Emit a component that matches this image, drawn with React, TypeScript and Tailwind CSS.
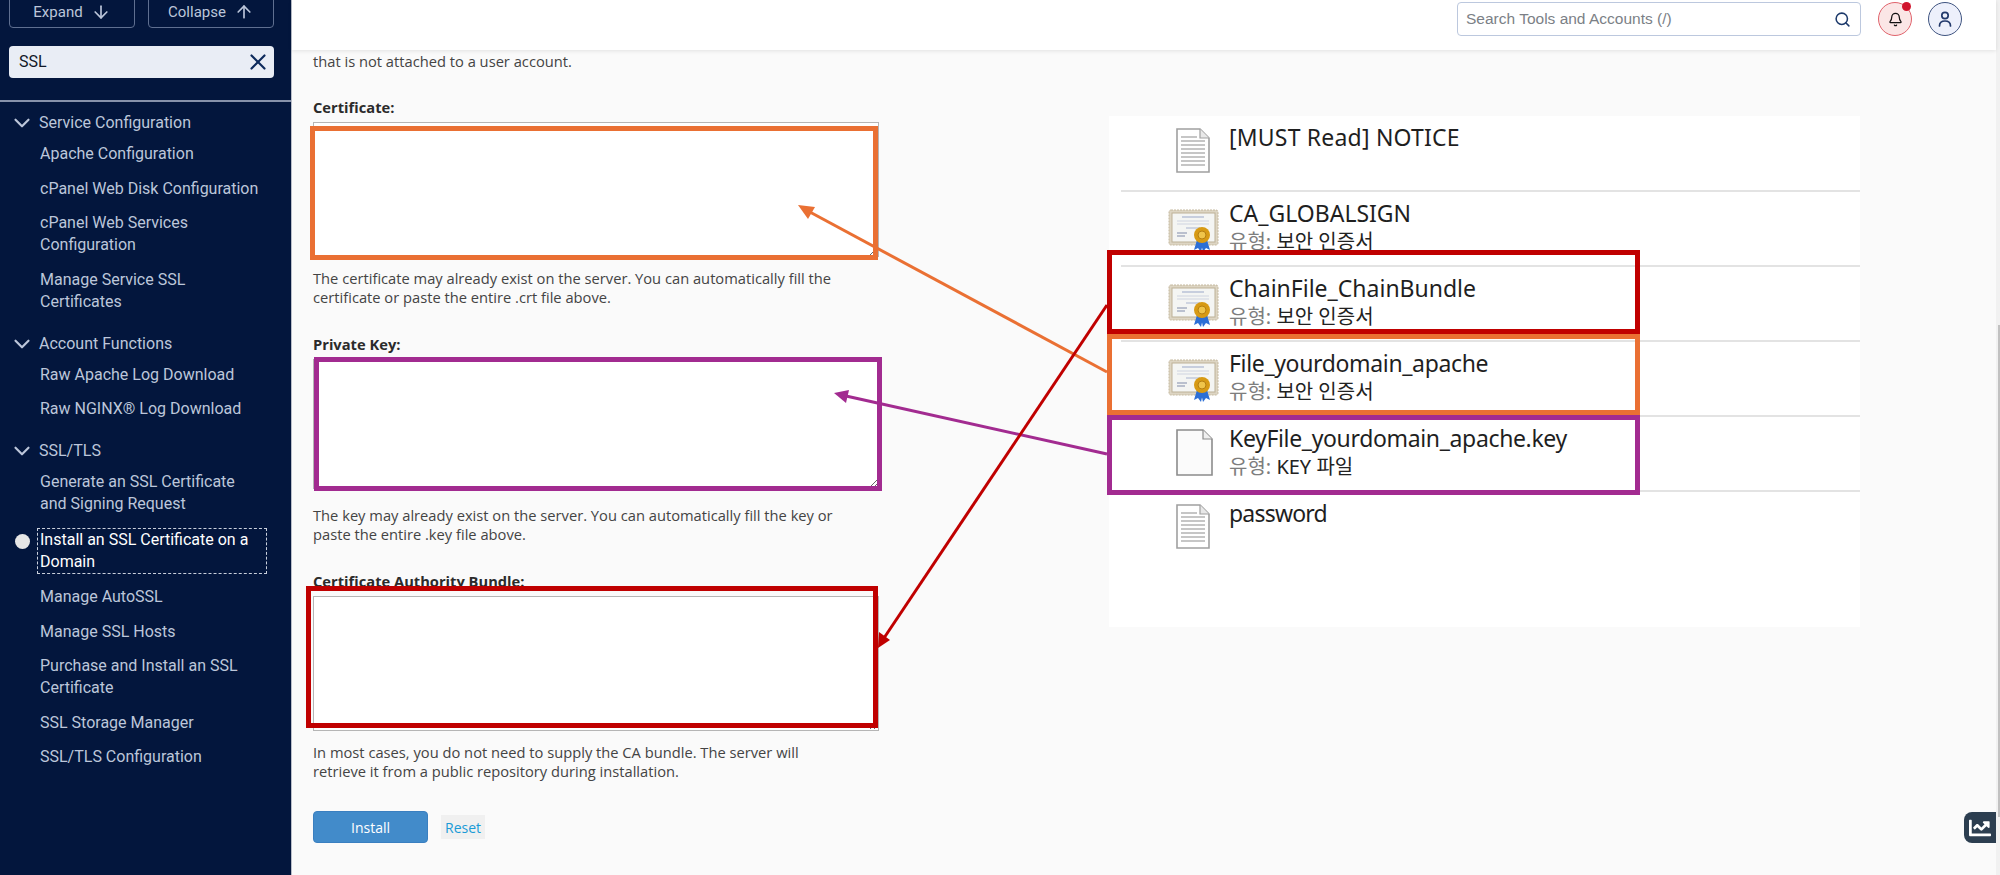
import { ArrowDown, ArrowUp, Bell, ChevronDown, Search, X } from 'lucide-react';
import { FaChartLine } from 'react-icons/fa';

const groups = [
  {
    title: 'Service Configuration',
    items: ['Apache Configuration', 'cPanel Web Disk Configuration', 'cPanel Web Services Configuration', 'Manage Service SSL Certificates'],
  },
  {
    title: 'Account Functions',
    items: ['Raw Apache Log Download', 'Raw NGINX® Log Download'],
  },
  {
    title: 'SSL/TLS',
    items: [
      'Generate an SSL Certificate and Signing Request',
      'Install an SSL Certificate on a Domain',
      'Manage AutoSSL',
      'Manage SSL Hosts',
      'Purchase and Install an SSL Certificate',
      'SSL Storage Manager',
      'SSL/TLS Configuration',
    ],
  },
];

const active = 'Install an SSL Certificate on a Domain';

function Sidebar() {
  return (
    <aside className="w-[292px] shrink-0 h-full overflow-hidden bg-[#03163d] border-r border-[#b9bec9] font-['Roboto',sans-serif] text-[16px] leading-[22px] text-[#bcc6da]">
      <div className="ml-[9px] -mt-1 flex w-[265px] justify-between">
        <button className="flex h-8 w-[126px] items-center justify-center gap-2 rounded border border-[#5f6f90] text-[15px]">
          Expand <ArrowDown size={20} />
        </button>
        <button className="flex h-8 w-[126px] items-center justify-center gap-2 rounded border border-[#5f6f90] text-[15px]">
          Collapse <ArrowUp size={20} />
        </button>
      </div>
      <div className="ml-[9px] mt-[18px] flex h-8 w-[265px] items-center justify-between rounded bg-[#e9edf5] pl-[10px] pr-[3px] text-[#111827]">
        SSL
        <X size={26} strokeWidth={2} className="text-[#0d2a5c]" />
      </div>
      <div className="mt-[22px] h-0.5 bg-[#8792ab]" />
      <nav className="mt-[10px] flex flex-col gap-5">
        {groups.map((group) => (
          <div key={group.title}>
            <div className="flex h-[22px] items-center gap-1 pl-[9px]">
              <ChevronDown size={26} strokeWidth={2} />
              {group.title}
            </div>
            <ul className="mt-[9px] flex flex-col gap-[12.5px]">
              {group.items.map((item) =>
                item === active ? (
                  <li key={item} className="relative ml-[37px] mr-6 border border-dashed border-[#c9cfdc] pl-[2px] text-white">
                    <span className="absolute -left-[23px] top-[5px] size-[15px] rounded-full bg-[#e6e6e6]" />
                    {item}
                  </li>
                ) : (
                  <li key={item} className="ml-10 mr-[26px]">{item}</li>
                ),
              )}
            </ul>
          </div>
        ))}
      </nav>
    </aside>
  );
}

function Header() {
  return (
    <header className="relative z-10 flex h-[50px] w-[1704px] items-start justify-end gap-4 bg-white pr-[34px] pt-0.5 shadow-[0_1px_4px_rgba(0,0,0,0.1)]">
      <div className="mr-px flex h-[34px] w-[404px] items-center justify-between rounded border border-[#bcc8de] pl-2 pr-[9px] font-['Liberation_Sans',sans-serif] text-[15.5px] text-[#7b7f86]">
        Search Tools and Accounts (/)
        <Search size={17} strokeWidth={2.2} className="text-[#1d3a6b]" />
      </div>
      <button className="relative flex size-[34px] items-center justify-center rounded-full border-[1.5px] border-[#e0636c] bg-[#fbe6e6] text-[#111]">
        <Bell size={15} strokeWidth={2} />
        <span className="absolute right-0 -top-px size-[9px] rounded-full bg-[#d0142c]" />
      </button>
      <button className="flex size-[34px] items-center justify-center rounded-full border-[1.5px] border-[#3f5480] bg-[#edf0fb]">
        <svg width="14" height="16" viewBox="0 0 14 16" fill="none" stroke="#22396b" strokeWidth="1.7">
          <circle cx="7" cy="4.5" r="3.2" />
          <path d="M1.5 15C1.5 11.5 4 10 7 10S12.5 11.5 12.5 15" strokeLinecap="round" />
        </svg>
      </button>
    </header>
  );
}

function Field({ label, help, className, areaClass }: { label: string; help: string[]; className: string; areaClass: string }) {
  return (
    <div className={className}>
      <label className="block text-[14.7px] font-bold leading-5 text-[#2b2b2b]">{label}</label>
      <textarea className={`mt-[5px] block w-[566px] border border-[#b5b5b5] bg-white ${areaClass}`} />
      <p className="mt-[12px] text-[14.7px] leading-[19px] text-[#444]">
        {help.map((line) => (
          <span key={line} className="block whitespace-nowrap">{line}</span>
        ))}
      </p>
    </div>
  );
}

function DocIcon() {
  return (
    <svg width="34" height="45" viewBox="0 0 34 45" className="ml-[67px] mt-[12px] shrink-0">
      <path d="M1 1H24L33 10V44H1Z" fill="#fff" stroke="#a0a0a0" strokeWidth="1.6" />
      <path d="M24 1V10H33" fill="#e8e8e8" stroke="#a0a0a0" strokeWidth="1.2" />
      {[9, 13, 17, 21, 25, 29, 33, 37].map((y) => (
        <path key={y} d={`M5 ${y}H${y < 12 ? 21 : 29}`} stroke="#a8a8a8" strokeWidth="1.3" />
      ))}
    </svg>
  );
}

function BlankIcon() {
  return (
    <svg width="37" height="47" viewBox="0 0 37 47" className="ml-[67px] mt-[12px] shrink-0">
      <path d="M1 1H27L36 10V46H1Z" fill="#fbfbfb" stroke="#8c8c8c" strokeWidth="1.6" />
      <path d="M27 1V10H36" fill="#f0f0f0" stroke="#8c8c8c" strokeWidth="1.2" />
    </svg>
  );
}

function CertIcon() {
  return (
    <svg width="51" height="44" viewBox="0 0 51 44" className="ml-[59px] mt-[17px] shrink-0">
      <rect x="1" y="1" width="49" height="35" rx="2" fill="#ddd5c3" stroke="#c4b89e" strokeDasharray="2 1" />
      <rect x="4" y="4" width="43" height="29" fill="#f4f5f3" stroke="#bdb197" />
      <path d="M14 8H36" stroke="#9aa7c8" strokeWidth="1" />
      <path d="M9 12H41M9 15H41" stroke="#cfd4e0" />
      <path d="M18 19H32" stroke="#a9b4cf" />
      <path d="M9 24H19M9 27H17" stroke="#a7afc2" strokeWidth="1.4" />
      <path d="M29 31L26 41L30 39L33 43L35 34Z" fill="#2c6fd6" />
      <path d="M39 31L42 41L38 39L35 43L33 34Z" fill="#2c6fd6" />
      <circle cx="34" cy="26" r="8" fill="#d79a14" />
      <circle cx="34" cy="26" r="4" fill="#efc44a" stroke="#b67f10" />
    </svg>
  );
}

const files = [
  { name: '[MUST Read] NOTICE', icon: 'doc', track: 'tracking-[0.2px]' },
  { name: 'CA_GLOBALSIGN', type: '보안 인증서', icon: 'cert', track: '' },
  { name: 'ChainFile_ChainBundle', type: '보안 인증서', icon: 'cert', track: '' },
  { name: 'File_yourdomain_apache', type: '보안 인증서', icon: 'cert', track: 'tracking-[-0.35px]' },
  { name: 'KeyFile_yourdomain_apache.key', type: 'KEY 파일', icon: 'blank', track: 'tracking-[-0.35px]' },
  { name: 'password', icon: 'doc', track: 'tracking-[-0.8px]' },
];

function FileList() {
  return (
    <section className="ml-[230px] mt-[66px] h-[511px] w-[751px] shrink-0 bg-white font-['Noto_Sans','Noto_Sans_CJK_KR',sans-serif]">
      {files.map((file, i) => (
        <div key={file.name} className={i > 0 ? 'ml-3 flex h-[75px] border-t-2 border-[#e3e3e3]' : 'ml-3 flex h-[74px]'}>
          <div className="-ml-3 flex">
            {file.icon === 'doc' && <DocIcon />}
            {file.icon === 'cert' && <CertIcon />}
            {file.icon === 'blank' && <BlankIcon />}
          </div>
          <div className={file.icon === 'cert' ? 'ml-[10px] pt-[6px]' : file.icon === 'blank' ? 'ml-[16px] pt-[6px]' : 'ml-[19px] pt-[6px]'}>
            <div className={`text-[23px] leading-[31px] text-[#1f1f1f] ${file.track}`}>{file.name}</div>
            {file.type && (
              <div className="text-[20px] leading-[25px] text-[#222]">
                <span className="text-[#7d7d7d]">유형: </span>
                {file.type}
              </div>
            )}
          </div>
        </div>
      ))}
    </section>
  );
}

function Annotations() {
  return (
    <>
      <div className="absolute left-[310px] top-[126px] z-20 h-[134px] w-[568px] border-[5px] border-[#ea7033]" />
      <div className="absolute left-[314px] top-[357px] z-20 h-[134px] w-[568px] border-[5px] border-[#a22b90]" />
      <div className="absolute left-[306px] top-[586px] z-20 h-[142px] w-[572px] border-[5px] border-[#c00000]" />
      <div className="absolute left-[1107px] top-[250px] z-20 h-[84px] w-[533px] border-[5px] border-[#c00000]" />
      <div className="absolute left-[1107px] top-[334px] z-20 h-[81px] w-[533px] border-[5px] border-[#ea7033]" />
      <div className="absolute left-[1107px] top-[415px] z-20 h-[80px] w-[533px] border-[5px] border-[#a22b90]" />
      <svg className="pointer-events-none absolute inset-0 z-30" width="2000" height="875">
        <path d="M1107 372L808 211" stroke="#ea7033" strokeWidth="3" />
        <path d="M798 205L815 207L808 219Z" fill="#ea7033" />
        <path d="M1107 454L846 396" stroke="#a22b90" strokeWidth="3" />
        <path d="M834 393L849 390L846 403Z" fill="#a22b90" />
        <path d="M1107 305L884 638" stroke="#c00000" strokeWidth="3" />
        <path d="M878 648L879 632L890 640Z" fill="#c00000" />
      </svg>
    </>
  );
}

export default function App() {
  return (
    <div className="relative flex h-screen overflow-hidden bg-[#fafafa] font-['Open_Sans',sans-serif]">
      <Sidebar />
      <main className="min-w-0 flex-1">
        <Header />
        <div className="flex pl-[21px]">
          <div className="w-[566px] shrink-0 pt-[2px]">
            <p className="text-[14.7px] leading-[19px] text-[#444]">that is not attached to a user account.</p>
            <Field
              className="mt-[26px]"
              areaClass="h-[135px]"
              label="Certificate:"
              help={['The certificate may already exist on the server. You can automatically fill the', 'certificate or paste the entire .crt file above.']}
            />
            <Field
              className="mt-[27px]"
              areaClass="mb-[17px] h-[130px]"
              label="Private Key:"
              help={['The key may already exist on the server. You can automatically fill the key or', 'paste the entire .key file above.']}
            />
            <Field
              className="mt-[27px]"
              areaClass="h-[135px]"
              label="Certificate Authority Bundle:"
              help={['In most cases, you do not need to supply the CA bundle. The server will', 'retrieve it from a public repository during installation.']}
            />
            <div className="mt-[30px] flex items-center gap-[13px]">
              <button className="h-8 w-[115px] rounded border border-[#3a7fc0] bg-[#428bca] text-[14px] text-white">Install</button>
              <button className="h-6 w-11 bg-[#f0f0f0] text-[14px] text-[#1a9bd7]">Reset</button>
            </div>
          </div>
          <FileList />
        </div>
      </main>
      {/* page scrollbar */}
      <div className="absolute inset-y-0 right-0 w-1 bg-[#f1f1f1]">
        <div className="ml-auto mt-[325px] h-[492px] w-0.5 bg-[#c1c1c1]" />
      </div>
      <div className="absolute right-1 top-[812px] flex h-[31px] w-8 items-center justify-center rounded-l-lg bg-[#2c3e50] text-[22px] text-white">
        <FaChartLine />
      </div>
      <Annotations />
    </div>
  );
}
